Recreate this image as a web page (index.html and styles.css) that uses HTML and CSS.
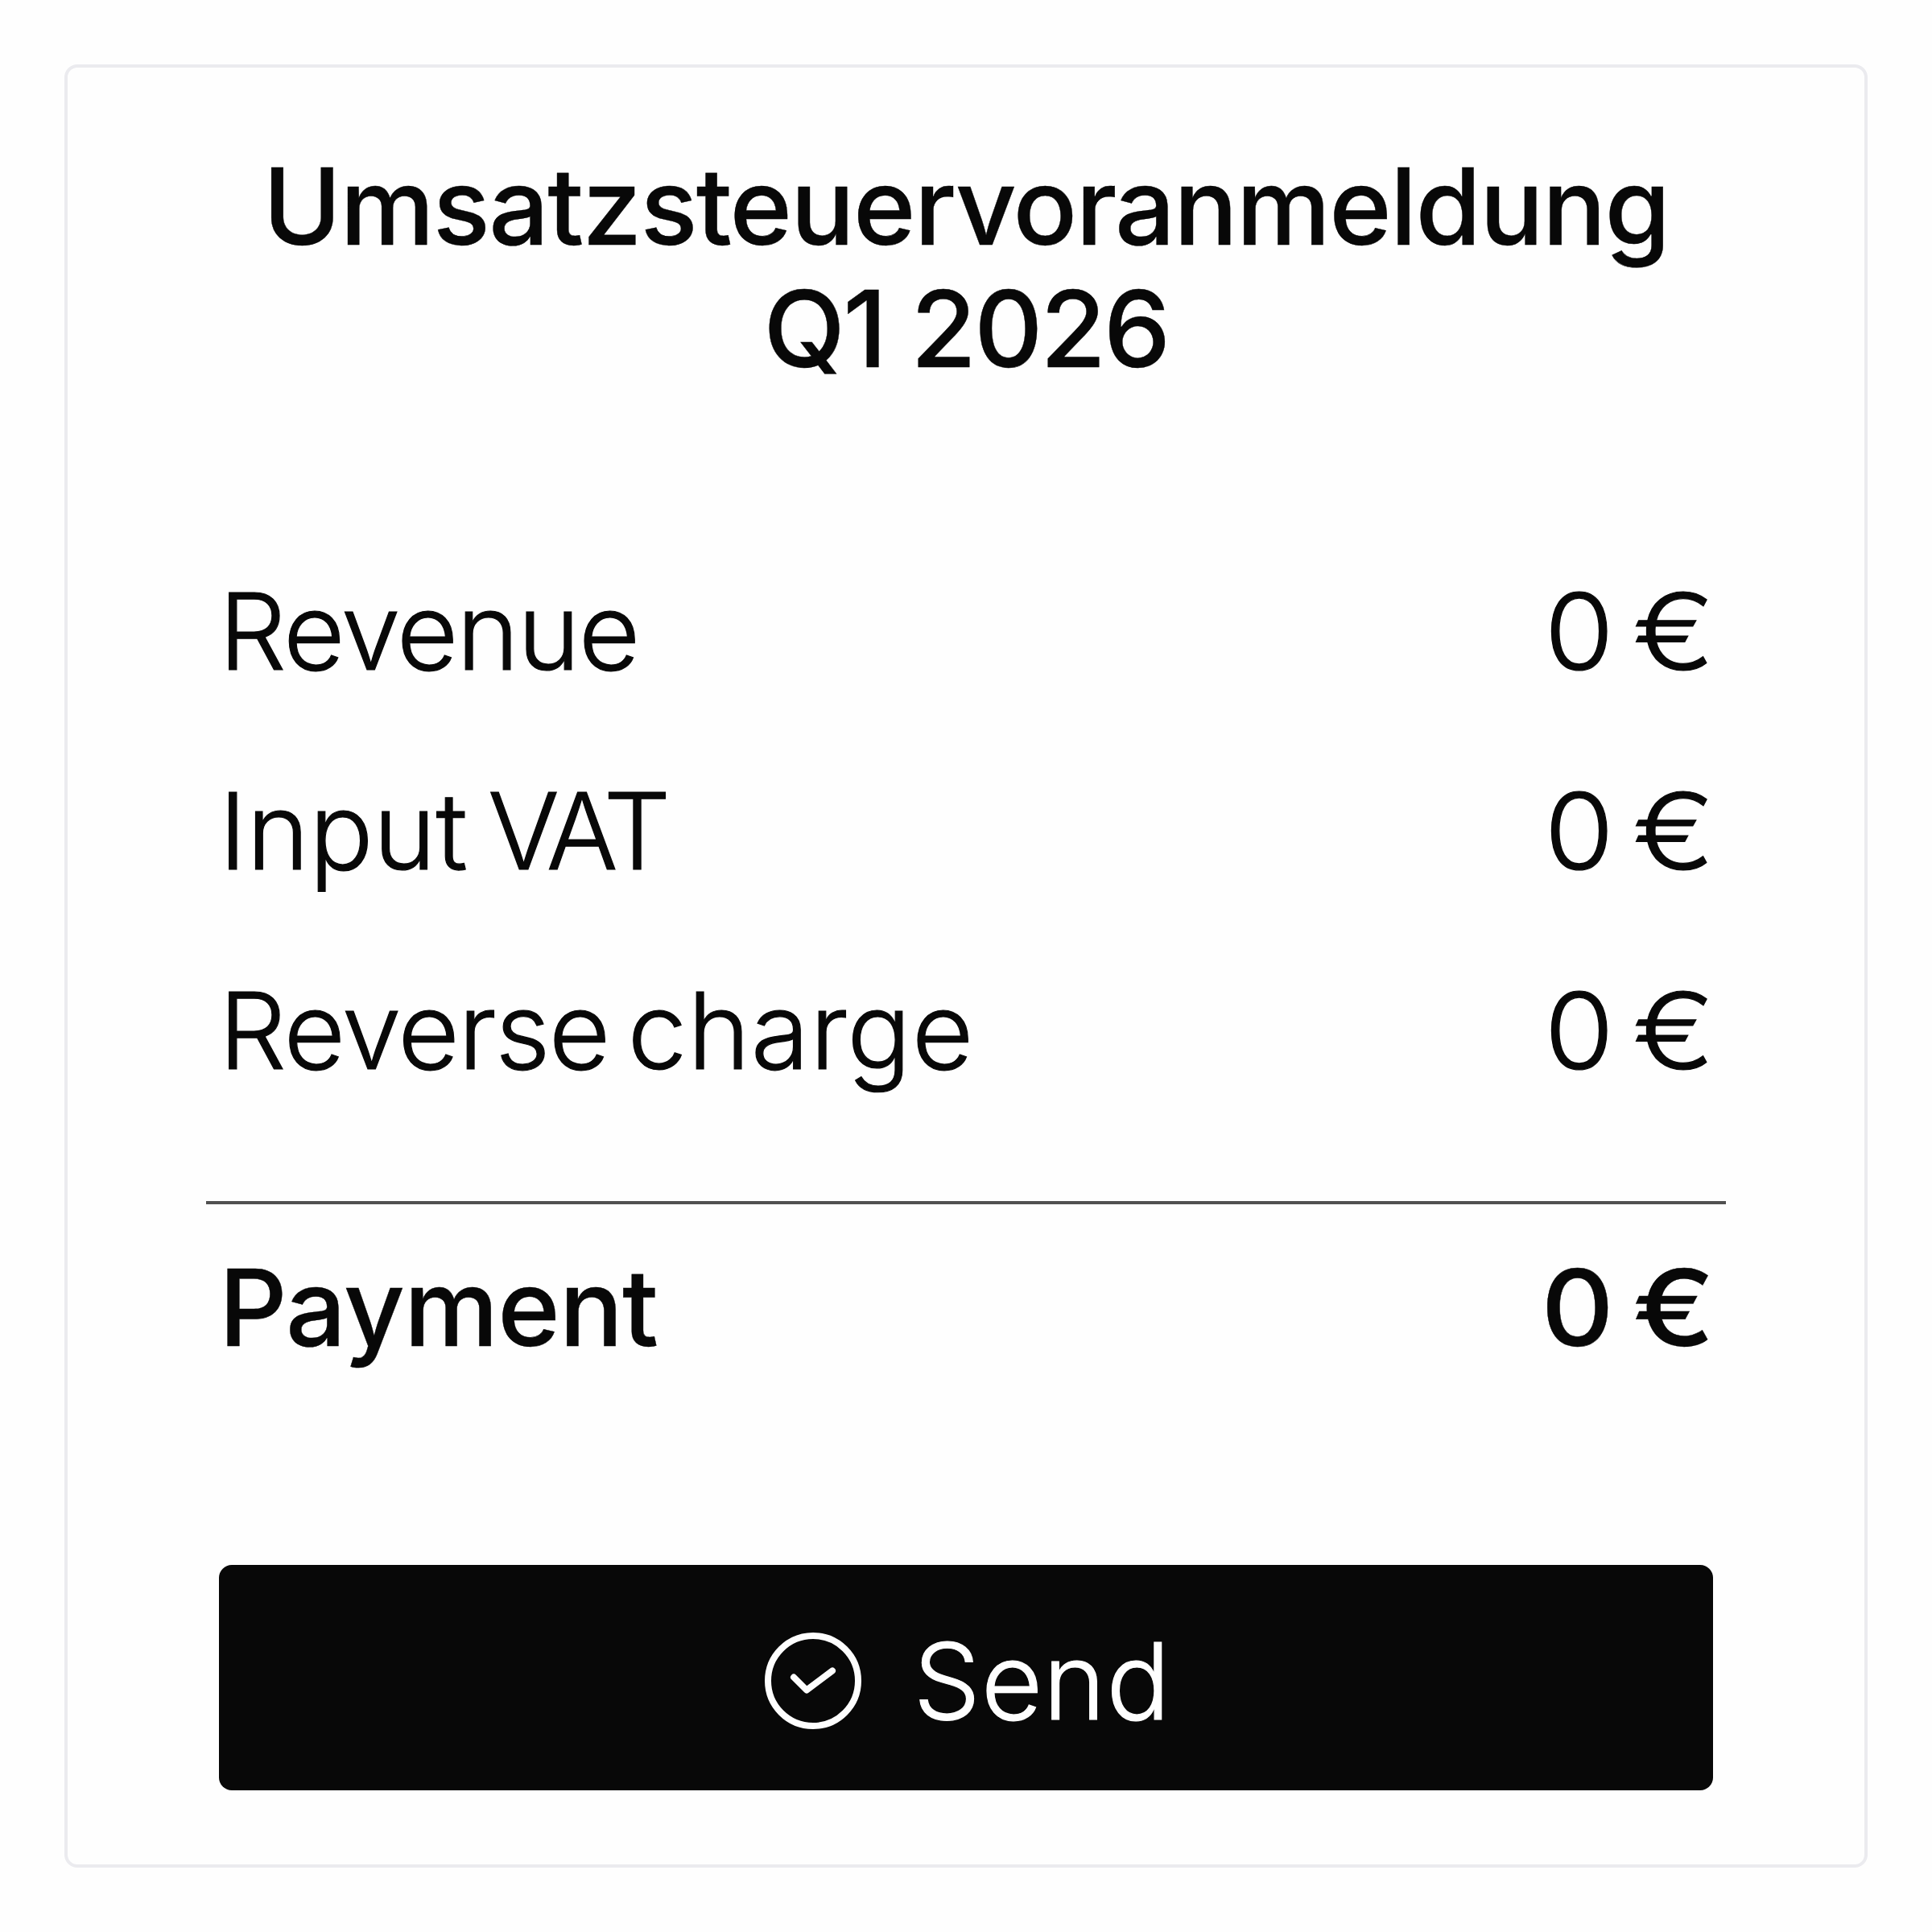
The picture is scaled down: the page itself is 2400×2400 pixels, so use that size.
FILE: index.html
```html
<!DOCTYPE html>
<html lang="en">
    <head>
        <meta charset="UTF-8">
        <meta name="viewport" content="width=device-width, initial-scale=1.0">
        <title>Umsatzsteuervoranmeldung Q1 2026</title>
        <link rel="stylesheet" href="styles.css">
    </head>
    <body>
        <main class="card">
            <h1 class="title"><span class="title-name">Umsatzsteuervoranmeldung</span><br><span class="title-period">Q1 2026</span></h1>
            <ul class="rows">
                <li class="row"><span class="revenue">Revenue</span><span class="amount"><span class="value">0</span> <span class="euro">€</span></span></li>
                <li class="row"><span class="input-vat">Input <span class="vat">VAT</span></span><span class="amount"><span class="value">0</span> <span class="euro">€</span></span></li>
                <li class="row"><span class="reverse">Reverse <span class="charge">charge</span></span><span class="amount"><span class="value">0</span> <span class="euro">€</span></span></li>
            </ul>
            <div class="row total"><span class="payment">Payment</span><span class="amount"><span class="value">0</span> <span class="euro">€</span></span></div>
            <button class="send" type="button">
                <svg class="icon" viewBox="0 0 120 120" fill="none" stroke="currentColor" stroke-width="8" stroke-linecap="round" stroke-linejoin="round">
                    <circle cx="60" cy="60" r="56" />
                    <path d="M36 55.5 52 71.5 84 47.5" />
                </svg>
                <span class="send-label">Send</span>
            </button>
        </main>
    </body>
</html>
```

FILE: styles.css
```css
* { box-sizing: border-box; }
body { margin: 0; padding: 80px; background: #fefefe; color: #080808; font-family: Inter, "Liberation Sans", sans-serif; font-size: 132px; font-weight: 300; -webkit-text-stroke: 1.2px; }
.card { height: 2240px; padding: 96px 172px 0; border: 4px solid #ebebef; border-radius: 16px; }
.title { margin: 0 0 176px; font-size: 132px; font-weight: 500; line-height: 152px; text-align: center; white-space: nowrap; -webkit-text-stroke: 0.4px; }
.title-name { letter-spacing: -1.8px; }
.title-period { letter-spacing: -2.8px; }
.rows { margin: 0 0 88px; padding: 0; list-style: none; }
.row { display: flex; justify-content: space-between; align-items: center; height: 248px; padding: 0 16px; line-height: 160px; white-space: nowrap; }
.revenue { letter-spacing: -2px; }
.input-vat { word-spacing: -12px; }
.vat { letter-spacing: -7px; }
.reverse { letter-spacing: -1.5px; word-spacing: -13px; }
.charge { letter-spacing: 0.9px; }
.amount { display: flex; align-items: baseline; gap: 33px; padding-right: 4px; }
.value { transform: scaleX(1.06); }
.euro { transform: scaleX(1.15); }
.total { height: 260px; border-top: 4px solid #505050; font-weight: 500; -webkit-text-stroke: 0.4px; }
.payment { letter-spacing: -1px; }
.send { display: flex; align-items: center; justify-content: center; gap: 65px; width: 1856px; height: 280px; margin: 192px auto 0; padding: 8px 0 0 4px; border: 0; border-radius: 16px; background: #080808; color: #fefefe; font: inherit; line-height: 160px; }
.send-label { letter-spacing: 0.7px; }
.icon { width: 120px; height: 120px; }
```
